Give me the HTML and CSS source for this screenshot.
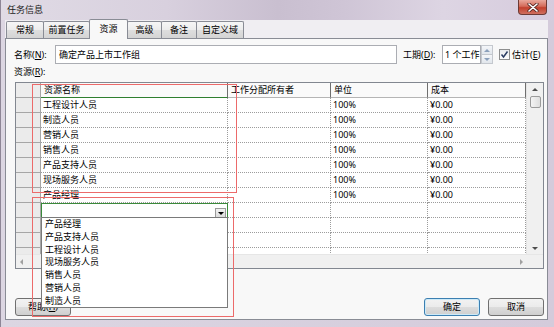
FILE: index.html
```html
<!DOCTYPE html>
<html lang="zh-CN">
<head>
    <meta charset="UTF-8">
    <title>任务信息</title>
    <link rel="stylesheet" href="styles.css">
</head>
<body>
    <div class="window">
        <div class="titlebar">
            <span class="title">任务信息</span>
            <div class="close">
                <svg width="12" height="9" viewBox="0 0 12 9">
                    <path d="M2 1 L10 8 M10 1 L2 8" stroke="#5a2a25" stroke-width="3.2" stroke-linecap="round"/>
                    <path d="M2 1 L10 8 M10 1 L2 8" stroke="#fff" stroke-width="1.6" stroke-linecap="round"/>
                </svg>
            </div>
        </div>

        <div class="client">
            <div class="tabs">
                <div class="tab t1">常规</div>
                <div class="tab t2">前置任务</div>
                <div class="tab t3 active">资源</div>
                <div class="tab t4">高级</div>
                <div class="tab t5">备注</div>
                <div class="tab t6">自定义域</div>
            </div>

            <div class="panel">
                <div class="field-row">
                    <label class="lbl-name">名称(<u>N</u>):</label>
                    <div class="textbox name-box">确定产品上市工作组</div>
                    <label class="lbl-dur">工期(<u>D</u>):</label>
                    <div class="textbox dur-box">1 个工作日</div>
                    <div class="spin">
                        <div class="spin-btn"><span class="tri up"></span></div>
                        <div class="spin-btn"><span class="tri down"></span></div>
                    </div>
                    <div class="checkbox">
                        <svg width="9" height="9" viewBox="0 0 9 9">
                            <path d="M1.5 4.5 L3.5 7 L7.5 1.5" fill="none" stroke="#2b3d63" stroke-width="1.5"/>
                        </svg>
                    </div>
                    <label class="lbl-est">估计(<u>E</u>)</label>
                </div>

                <div class="res-label">资源(<u>R</u>):</div>

                <div class="grid">
                    <div class="grid-body">
                        <div class="cols">
                            <div class="row head">
                                <div class="rh"></div>
                                <div class="c name active-col">资源名称</div>
                                <div class="c owner">工作分配所有者</div>
                                <div class="c unit">单位</div>
                                <div class="c cost">成本</div>
                            </div>
                            <div class="row">
                                <div class="rh"></div>
                                <div class="c name">工程设计人员</div>
                                <div class="c owner"></div>
                                <div class="c unit">100%</div>
                                <div class="c cost">¥0.00</div>
                            </div>
                            <div class="row">
                                <div class="rh"></div>
                                <div class="c name">制造人员</div>
                                <div class="c owner"></div>
                                <div class="c unit">100%</div>
                                <div class="c cost">¥0.00</div>
                            </div>
                            <div class="row">
                                <div class="rh"></div>
                                <div class="c name">营销人员</div>
                                <div class="c owner"></div>
                                <div class="c unit">100%</div>
                                <div class="c cost">¥0.00</div>
                            </div>
                            <div class="row">
                                <div class="rh"></div>
                                <div class="c name">销售人员</div>
                                <div class="c owner"></div>
                                <div class="c unit">100%</div>
                                <div class="c cost">¥0.00</div>
                            </div>
                            <div class="row">
                                <div class="rh"></div>
                                <div class="c name">产品支持人员</div>
                                <div class="c owner"></div>
                                <div class="c unit">100%</div>
                                <div class="c cost">¥0.00</div>
                            </div>
                            <div class="row">
                                <div class="rh"></div>
                                <div class="c name">现场服务人员</div>
                                <div class="c owner"></div>
                                <div class="c unit">100%</div>
                                <div class="c cost">¥0.00</div>
                            </div>
                            <div class="row">
                                <div class="rh"></div>
                                <div class="c name">产品经理</div>
                                <div class="c owner"></div>
                                <div class="c unit">100%</div>
                                <div class="c cost">¥0.00</div>
                            </div>
                            <div class="row">
                                <div class="rh"></div>
                                <div class="c name editing">
                                    <div class="drop-btn"><span class="tri down dark"></span></div>
                                </div>
                                <div class="c owner"></div>
                                <div class="c unit"></div>
                                <div class="c cost"></div>
                            </div>
                            <div class="row">
                                <div class="rh"></div>
                                <div class="c name"></div>
                                <div class="c owner"></div>
                                <div class="c unit"></div>
                                <div class="c cost"></div>
                            </div>
                            <div class="row">
                                <div class="rh"></div>
                                <div class="c name"></div>
                                <div class="c owner"></div>
                                <div class="c unit"></div>
                                <div class="c cost"></div>
                            </div>
                            <div class="row">
                                <div class="rh"></div>
                                <div class="c name"></div>
                                <div class="c owner"></div>
                                <div class="c unit"></div>
                                <div class="c cost"></div>
                            </div>
                        </div>
                        <div class="vscroll">
                            <div class="sb-btn"><span class="tri up"></span></div>
                            <div class="thumb"></div>
                            <div class="sb-track"></div>
                            <div class="sb-btn"><span class="tri down"></span></div>
                        </div>
                    </div>
                    <div class="hscroll">
                        <div class="hbar">
                            <span class="tri left"></span>
                            <span class="tri right"></span>
                        </div>
                        <div class="corner"></div>
                    </div>
                </div>

                <div class="buttons">
                    <div class="btn help">帮助(<u>H</u>)</div>
                    <div class="btn ok">确定</div>
                    <div class="btn">取消</div>
                </div>
            </div>
        </div>

        <!-- open dropdown of the edited cell -->
        <div class="droplist">
            <div class="item">产品经理</div>
            <div class="item">产品支持人员</div>
            <div class="item">工程设计人员</div>
            <div class="item">现场服务人员</div>
            <div class="item">销售人员</div>
            <div class="item">营销人员</div>
            <div class="item">制造人员</div>
        </div>

        <!-- annotation boxes -->
        <div class="mark mark-1"></div>
        <div class="mark mark-2"></div>
    </div>
</body>
</html>
```

FILE: styles.css
```css
* {
    box-sizing: border-box;
}
body {
    margin: 0;
    font-family: "Noto Sans", "Noto Sans CJK SC", sans-serif;
    font-size: 9px;
    color: #000;
    background: #d3c9da;
}
u {
    text-decoration: underline;
}
.window {
    position: relative;
    width: 554px;
    height: 327px;
    padding: 0 6px 7px 5px;
    display: flex;
    flex-direction: column;
    background: linear-gradient(90deg, #8e8696 0, #8e8696 1px, #dcd6e2 1px, #d4cbdb 100%);
    overflow: hidden;
}
.titlebar {
    height: 20px;
    display: flex;
    align-items: flex-start;
    margin: 0 -6px 0 -4px;
    padding: 0 7px 0 5px;
    background: linear-gradient(90deg, #e0dbe5 0%, #d8d0de 30%, #c9bfd0 50%, #cfc5d6 62%, #ddd5e3 80%, #d6cbdd 100%);
}
.title {
    line-height: 20px;
    padding-left: 1px;
    color: #1a1a1a;
}
.close {
    margin-left: auto;
    width: 29px;
    height: 15px;
    margin-top: 0;
    border: 1px solid #6d3a35;
    border-top: none;
    border-radius: 0 0 4px 4px;
    background: linear-gradient(#e9a79b, #d46b5a 45%, #c2402d 55%, #d0705f);
    display: flex;
    align-items: center;
    justify-content: center;
}
.client {
    flex: 1;
    display: flex;
    flex-direction: column;
    background: #f0eef2;
}
.tabs {
    height: 18px;
    display: flex;
    align-items: flex-end;
    padding-left: 1px;
}
.tab {
    height: 17px;
    margin-right: -1px;
    border: 1px solid #898c95;
    border-bottom: none;
    border-radius: 2px 2px 0 0;
    background: linear-gradient(#f6f6f6, #ececec 50%, #dedede 51%, #d4d4d4);
    text-align: center;
    line-height: 15px;
}
.tab.active {
    height: 20px;
    margin-bottom: -1px;
    background: #f8f8f8;
    position: relative;
    z-index: 1;
    line-height: 17px;
}
.t1 { width: 38px; }
.t2 { width: 47px; }
.t3 { width: 39px; }
.t4 { width: 35px; }
.t5 { width: 36px; }
.t6 { width: 48px; }

.panel {
    flex: 1;
    display: flex;
    flex-direction: column;
    border: 1px solid #898c95;
    background: #f8f8f8;
    padding: 6px 3px 3px 8px;
}
.field-row {
    height: 19px;
    display: flex;
    align-items: center;
}
.lbl-name {
    width: 41px;
}
.textbox {
    height: 19px;
    border: 1px solid #abadb3;
    background: #fff;
    padding-left: 3px;
    line-height: 17px;
    white-space: nowrap;
    overflow: hidden;
}
.name-box {
    width: 342px;
}
.lbl-dur {
    width: 39px;
    margin-left: 6px;
}
.dur-box {
    width: 39px;
    padding-left: 2px;
}
.spin {
    width: 12px;
    height: 19px;
    display: flex;
    flex-direction: column;
}
.spin-btn {
    flex: 1;
    border: 1px solid #c4c8ce;
    background: linear-gradient(#f4f6f9, #e1e6ec);
    display: flex;
    align-items: center;
    justify-content: center;
}
.spin-btn + .spin-btn {
    border-top: none;
}
.checkbox {
    width: 11px;
    height: 11px;
    margin-left: 6px;
    border: 1px solid #8e8f8f;
    background: linear-gradient(#e9ebee, #fdfdfd);
    display: flex;
    align-items: center;
    justify-content: center;
}
.lbl-est {
    margin-left: 2px;
}
.res-label {
    height: 14px;
    margin-top: 1px;
    line-height: 14px;
}

.grid {
    width: 529px;
    margin: 3px 0 0 1px;
    border: 1px solid #828790;
    background: #fff;
}
.grid-body {
    height: 171px;
    display: flex;
}
.cols {
    width: 510px;
    overflow: hidden;
}
.row {
    height: 15px;
    display: flex;
}
.rh {
    width: 25px;
    flex: none;
    background: #ebebeb;
    border-right: 1px solid #a6a6a6;
    border-bottom: 1px solid #a6a6a6;
}
.c {
    flex: none;
    height: 15px;
    padding-left: 2px;
    line-height: 14px;
    border-right: 1px dotted #9c9c9c;
    border-bottom: 1px dotted #9c9c9c;
    white-space: nowrap;
    overflow: hidden;
}
.name { width: 187px; }
.owner { width: 103px; }
.unit { width: 97px; }
.cost { width: 98px; }
.head .c {
    background: #fafafa;
    padding-left: 3px;
    border-right: 1px solid #6f6f6f;
    border-bottom: 1px solid #b5b5b5;
}
.head .rh {
    background: #ececec;
}
.head .active-col {
    border-bottom: 1px solid #2f7f2f;
}
.editing {
    position: relative;
    border: 1px solid #3a8a3a;
    border-bottom: none;
    display: flex;
    justify-content: flex-end;
    padding: 4px 1px 0 0;
}
.drop-btn {
    width: 11px;
    height: 10px;
    border: 1px solid #9a9a9a;
    background: linear-gradient(#f3f3f3, #dcdcdc);
    display: flex;
    align-items: center;
    justify-content: center;
}
.vscroll {
    width: 17px;
    display: flex;
    flex-direction: column;
    background: #f0f0f0;
    border-left: 1px solid #e4e4e4;
}
.sb-btn {
    height: 12px;
    display: flex;
    align-items: center;
    justify-content: center;
}
.thumb {
    height: 12px;
    margin: 1px 2px 0 3px;
    border: 1px solid #9b9b9b;
    border-radius: 2px;
    background: linear-gradient(90deg, #f4f4f4, #dedede);
}
.sb-track {
    flex: 1;
}
.hscroll {
    height: 14px;
    display: flex;
    background: #f0f0f0;
    border-top: 1px solid #e6e6e6;
}
.hbar {
    width: 510px;
    display: flex;
    align-items: center;
    justify-content: space-between;
    padding: 0 3px 0 4px;
}
.corner {
    flex: 1;
}

/* tiny arrow glyphs */
.tri {
    width: 0;
    height: 0;
    border: 3px solid transparent;
}
.tri.up {
    border-top: none;
    border-bottom: 3px solid #4d4d4d;
}
.tri.down {
    border-bottom: none;
    border-top: 3px solid #4d4d4d;
}
.tri.dark {
    border-top-color: #000;
}
.tri.left {
    border-left: none;
    border-right: 3px solid #a0a0a0;
}
.tri.right {
    border-right: none;
    border-left: 3px solid #a0a0a0;
}
.spin .tri.up {
    border-bottom-color: #8ba0bb;
}
.spin .tri.down {
    border-top-color: #8ba0bb;
}

.buttons {
    margin-top: auto;
    display: flex;
    gap: 8px;
}
.btn {
    width: 56px;
    height: 18px;
    border: 1px solid #707070;
    border-radius: 3px;
    background: linear-gradient(#f2f2f2, #ebebeb 50%, #dddddd 51%, #cfcfcf);
    text-align: center;
    line-height: 16px;
}
.help {
    margin-left: 1px;
}
.ok {
    margin-left: auto;
    border-color: #3c7fb1;
    box-shadow: inset 0 0 0 1px #cdeaf8;
}

.droplist {
    position: absolute;
    left: 41px;
    top: 217px;
    width: 187px;
    height: 91px;
    border: 1px solid #7a7a7a;
    background: #fff;
}
.item {
    height: 12.8px;
    line-height: 12.8px;
    padding-left: 3px;
}
.mark {
    position: absolute;
    border: 1px solid #ec6a6a;
}
.mark-1 {
    left: 32px;
    top: 84px;
    width: 205px;
    height: 109px;
}
.mark-2 {
    left: 32px;
    top: 197px;
    width: 202px;
    height: 120px;
}
```
